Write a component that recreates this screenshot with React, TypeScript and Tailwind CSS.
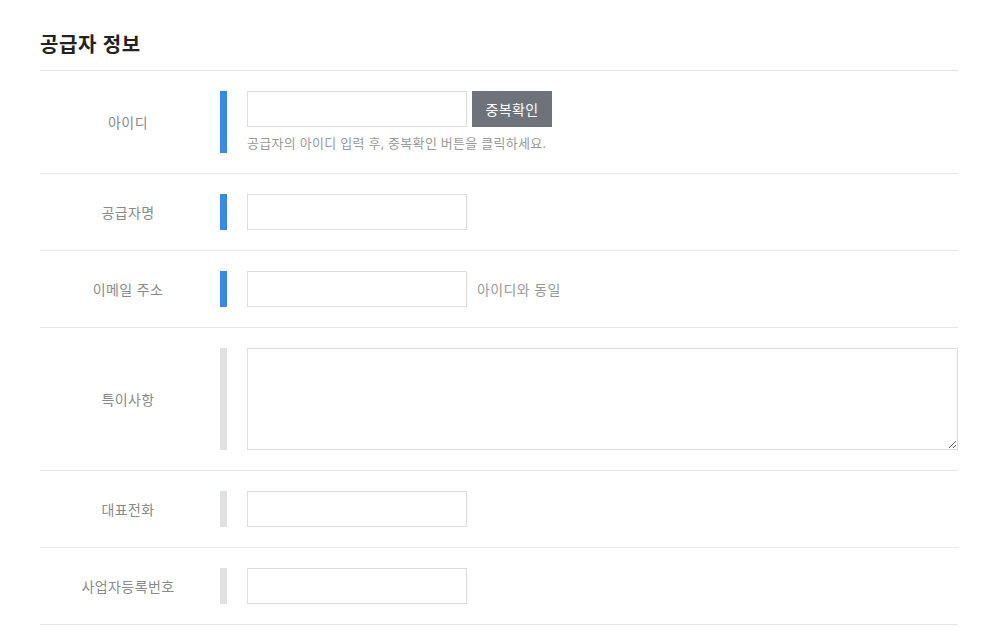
import React from 'react';

type Row = {
  label: string;
  required: boolean;
  kind: 'id' | 'text' | 'email' | 'textarea';
};

const rows: Row[] = [
  { label: '아이디', required: true, kind: 'id' },
  { label: '공급자명', required: true, kind: 'text' },
  { label: '이메일 주소', required: true, kind: 'email' },
  { label: '특이사항', required: false, kind: 'textarea' },
  { label: '대표전화', required: false, kind: 'text' },
  { label: '사업자등록번호', required: false, kind: 'text' },
];

const inputClass =
  'w-[220px] h-[36px] border border-[#dddddd] bg-white px-2 text-sm outline-none';

const FieldRow: React.FC<{ row: Row }> = ({ row }) => {
  return (
    <div className="flex items-stretch border-b border-[#e8e8e8] py-5">
      <div className="w-[176px] shrink-0 flex items-center justify-center text-[14px] tracking-[0.4px] text-[#8a8a8a]">
        {row.label}
      </div>
      <div
        className={`ml-[4px] w-[7px] shrink-0 ${row.required ? 'bg-[#3a87e8]' : 'bg-[#dfe1e3]'}`}
      />
      <div className="ml-[20px] flex-1 min-w-0">
        {row.kind === 'id' && (
          <div>
            <div className="flex items-center">
              <input className={inputClass} />
              <button className="ml-[5px] w-[80px] h-[36px] bg-[#6e737b] text-white text-[14px] tracking-[0.4px]">
                중복확인
              </button>
            </div>
            <p className="mt-[6px] text-[13px] leading-[20px] tracking-[0.3px] text-[#999999]">
              공급자의 아이디 입력 후, 중복확인 버튼을 클릭하세요.
            </p>
          </div>
        )}
        {row.kind === 'text' && <input className={inputClass} />}
        {row.kind === 'email' && (
          <div className="flex items-center">
            <input className={inputClass} />
            <span className="ml-[10px] text-[14px] tracking-[0.4px] text-[#999999]">아이디와 동일</span>
          </div>
        )}
        {row.kind === 'textarea' && (
          <textarea className="block w-full h-[102px] border border-[#dddddd] bg-white p-2 text-sm outline-none" />
        )}
      </div>
    </div>
  );
};

export default function App() {
  return (
    <div
      className="min-h-screen bg-white px-[40px] pt-[29px]"
      style={{ fontFamily: '"Noto Sans", "Noto Sans CJK KR", sans-serif' }}
    >
      <div className="w-[918px]">
        <h2 className="text-[20px] leading-[32px] font-bold tracking-[0.6px] text-[#222222] pb-[9px] border-b border-[#e5e5e5]">
          공급자 정보
        </h2>
        {rows.map((row) => (
          <FieldRow key={row.label} row={row} />
        ))}
      </div>
    </div>
  );
}
